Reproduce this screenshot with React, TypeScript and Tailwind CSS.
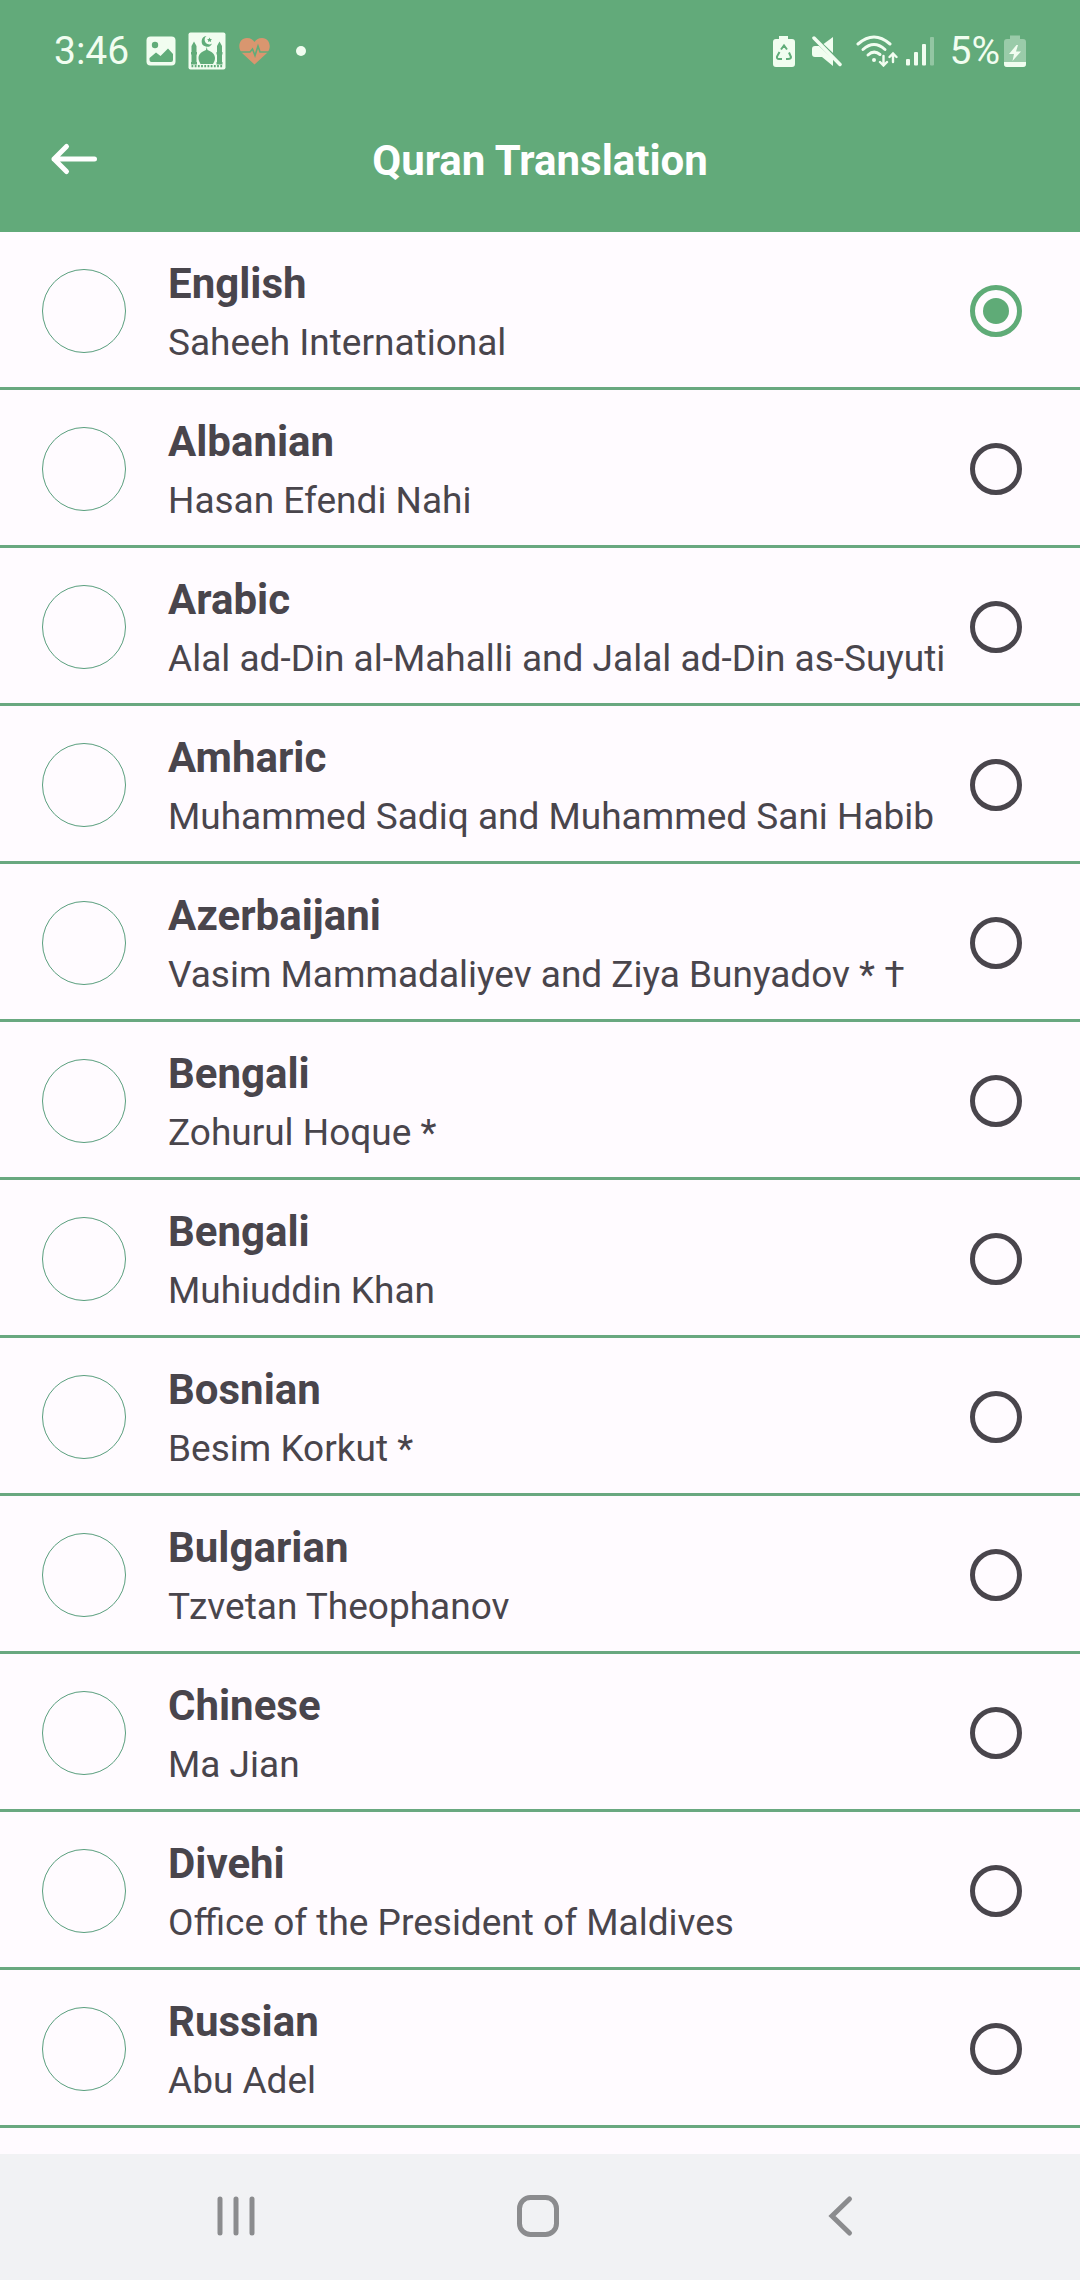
import React, { useState } from 'react';

const translations = [
  { id: 1, language: 'English', author: 'Saheeh International' },
  { id: 2, language: 'Albanian', author: 'Hasan Efendi Nahi' },
  { id: 3, language: 'Arabic', author: 'Alal ad-Din al-Mahalli and Jalal ad-Din as-Suyuti' },
  { id: 4, language: 'Amharic', author: 'Muhammed Sadiq and Muhammed Sani Habib' },
  { id: 5, language: 'Azerbaijani', author: 'Vasim Mammadaliyev and Ziya Bunyadov * †' },
  { id: 6, language: 'Bengali', author: 'Zohurul Hoque *' },
  { id: 7, language: 'Bengali', author: 'Muhiuddin Khan' },
  { id: 8, language: 'Bosnian', author: 'Besim Korkut *' },
  { id: 9, language: 'Bulgarian', author: 'Tzvetan Theophanov' },
  { id: 10, language: 'Chinese', author: 'Ma Jian' },
  { id: 11, language: 'Divehi', author: 'Office of the President of Maldives' },
  { id: 12, language: 'Russian', author: 'Abu Adel' },
];

const StatusBar: React.FC = () => (
  <div className="flex h-[102px] items-center justify-between pr-[54px] pl-[54px] text-[#f1fdf0]">
    <div className="flex items-center">
      <span className="w-[92px] text-[39px] leading-[44px] whitespace-nowrap">3:46</span>
      {/* Gallery */}
      <svg className="h-[30px] w-[30px]" viewBox="0 0 30 30">
        <rect x="0.5" y="0.5" width="29" height="29" rx="4" fill="currentColor" />
        <circle cx="9" cy="9" r="3.2" fill="#60ac79" />
        <path d="M3.5 22 L10 16.5 L14.5 20 L22 12.5 L27 18 V24 Q27 26 25 26 H5.5 Q3.5 26 3.5 24 Z" fill="#60ac79" />
      </svg>
      {/* Mosque */}
      <svg className="ml-3 h-[38px] w-[38px]" viewBox="0 0 38 38">
        <rect x="0.5" y="0.5" width="37" height="37" rx="2" fill="currentColor" />
        <g fill="#60ac79">
          <path d="M18.500 4 A5.400 5.400 0 1 0 24 11.500 A4.500 4.500 0 0 1 18.500 4 Z" />
          <path d="M21.500 5.500 l.8 1.500 1.700.2 -1.200 1.200 .3 1.700 -1.600-.8 -1.500.8 .3-1.700 -1.200-1.200 1.700-.2 Z" />
          <path d="M18.700 15 L19.500 18 C24 19.500 27 22.500 27 26 C27 28.500 26 30 25 32 H12.500 C11.500 30 10.500 28.500 10.500 26 C10.500 22.500 13.500 19.500 18 18 Z" />
          <path d="M6 9.500 L8.500 14 V20 H9 V22.500 H8.500 V30 H9 V32.500 H3 V30 H3.500 V22.500 H3 V20 H3.500 V14 Z" />
          <path d="M31.500 9.500 L34 14 V20 H34.500 V22.500 H34 V30 H34.500 V32.500 H28.500 V30 H29 V22.500 H28.500 V20 H29 V14 Z" />
        </g>
        <path d="M3.500 34.200 H34.500" stroke="#60ac79" strokeWidth="2.200" strokeDasharray="1.800 1.400" />
      </svg>
      {/* Heart rate */}
      <svg className="ml-3 h-[28px] w-[34px]" viewBox="0 0 34 28">
        <path d="M16.500 27.500 L4 16 C-1 11 1 1 9 1 C13 1 15 3 16.500 5 C18 3 20 1 24 1 C32 1 34 11 29 16 Z" fill="#d9966f" />
        <path d="M1 15 H12 L14.500 12 L17 18.500 L20 9 L22 15 H32" fill="none" stroke="#60ac79" strokeWidth="1.600" />
      </svg>
      <span className="ml-6 h-[10px] w-[10px] rounded-full bg-[#f1fdf0]" />
    </div>

    <div className="flex items-center">
      {/* Battery protection */}
      <svg className="h-[33px] w-[24px]" viewBox="0 0 24 33">
        <path d="M7 1 H16 V4 H20 Q23 4 23 7 V29 Q23 32 20 32 H4 Q1 32 1 29 V7 Q1 4 4 4 H7 Z" fill="currentColor" />
        <path d="M9 14.500 L12 10.500 L15 14.500 M17 17.500 L19 22 Q19 24 16 24 H14 M10 24 H7 Q4.500 24 5 21.500 L7.500 17" fill="none" stroke="#60ac79" strokeWidth="2" />
      </svg>
      {/* Muted */}
      <svg className="ml-[14px] h-[32px] w-[32px]" viewBox="0 0 32 32">
        <path d="M23 2 V18 L13.500 9 Z" fill="currentColor" />
        <path d="M5 11 H9 L23 24 V31 L12 22 H5 Q2 22 2 19 V14 Q2 11 5 11 Z" fill="currentColor" />
        <path d="M4 3 L30 29.500" stroke="currentColor" strokeWidth="3.500" strokeLinecap="round" />
      </svg>
      {/* Wi-Fi */}
      <svg className="ml-[14px] h-[32px] w-[42px]" viewBox="0 0 42 32" fill="none" stroke="currentColor" strokeWidth="3" strokeLinecap="round">
        <path d="M2 9 Q18 -5 34 9" />
        <path d="M7 14.500 Q18 4.500 29 14.500" />
        <path d="M12 20 Q18 14.500 24 19.500" />
        <circle cx="18" cy="25" r="1" fill="currentColor" strokeWidth="2" />
        <path d="M27.500 21 V30 M24 27 L27.500 30.500 L31 27" strokeWidth="2.400" />
        <path d="M37 27 V19 M33.500 22 L37 18.500 L40.500 22" strokeWidth="2.400" />
      </svg>
      {/* Signal */}
      <svg className="ml-2 h-[30px] w-[28px]" viewBox="0 0 28 30" fill="currentColor">
        <rect x="0" y="23" width="4" height="6.500" rx="1" />
        <rect x="8" y="16" width="4" height="13.500" rx="1" />
        <rect x="16" y="8" width="4" height="21.500" rx="1" />
        <rect x="24" y="1" width="4" height="28.500" rx="1" opacity="0.350" />
      </svg>
      <span className="ml-4 text-[39px] leading-[44px]">5%</span>
      {/* Charging */}
      <svg className="ml-1 h-[33px] w-[22px]" viewBox="0 0 22 33">
        <path d="M6 0.500 H16 V4 H19 Q22 4 22 7 V29 Q22 32 19 32 H3 Q0 32 0 29 V7 Q0 4 3 4 H6 Z" fill="currentColor" opacity="0.400" />
        <path d="M0 27 H22 V29 Q22 32 19 32 H3 Q0 32 0 29 Z M12.500 10 L5 19 H10 L8.500 26 L17 16.500 H12 L14 10 Z" fill="currentColor" />
      </svg>
    </div>
  </div>
);

const NavigationBar: React.FC = () => (
  <nav className="grid h-[126px] grid-cols-3 bg-[#f1f2f4] pr-[88px] pb-[2px] pl-[84px] text-[#8b8c8e]">
    <button type="button" aria-label="Recent apps" className="flex items-center justify-center">
      <svg className="h-[42px] w-[42px]" viewBox="0 0 42 42" stroke="currentColor" strokeWidth="5" strokeLinecap="round">
        <path d="M6 4 V38 M22 4 V38 M38 4 V38" />
      </svg>
    </button>
    <button type="button" aria-label="Home" className="flex items-center justify-center">
      <svg className="h-[42px] w-[42px]" viewBox="0 0 42 42" fill="none" stroke="currentColor" strokeWidth="5">
        <rect x="2.500" y="2.500" width="37" height="37" rx="11" />
      </svg>
    </button>
    <button type="button" aria-label="Back" className="flex items-center justify-center">
      <svg className="h-[42px] w-[42px]" viewBox="0 0 42 42" fill="none" stroke="currentColor" strokeWidth="5" strokeLinecap="round">
        <path d="M29.500 4 L12 21 L29.500 38" />
      </svg>
    </button>
  </nav>
);

const App: React.FC = () => {
  const [selected, setSelected] = useState(1);

  return (
    <div className="flex min-h-screen flex-col bg-[#fffbff] font-[Roboto,sans-serif] text-[#49454c]">
      <header className="bg-[#62aa7a]">
        <StatusBar />
        <div className="grid h-[130px] grid-cols-[98px_1fr_98px] items-start pt-[29px]">
          <button type="button" aria-label="Go back" className="flex h-[56px] items-center justify-end text-white">
            <svg className="h-[36px] w-[48px]" viewBox="0 0 48 36" fill="none" stroke="currentColor" strokeWidth="5" strokeLinecap="round" strokeLinejoin="round">
              <path d="M44.500 18 H4 M16.500 5.500 L4 18 L16.500 30.500" />
            </svg>
          </button>
          <h1 className="text-center text-[42px] leading-[60px] font-bold text-white">Quran Translation</h1>
        </div>
      </header>

      <main className="flex-1">
        {translations.map((item) => (
          <label
            key={item.id}
            className="flex h-[158px] cursor-pointer items-center border-b-[3px] border-[#69a880] pt-[3px] pr-[58px] pl-[42px]"
          >
            <span className="h-[84px] w-[84px] shrink-0 rounded-full border border-[#5a9f7e]" />
            <span className="ml-[42px] flex min-w-0 flex-1 flex-col pt-1">
              <span className="text-[42px] leading-[60px] font-bold">{item.language}</span>
              <span className="text-[37px] leading-[58px] whitespace-nowrap">{item.author}</span>
            </span>
            <input
              type="radio"
              name="translation"
              checked={selected === item.id}
              onChange={() => setSelected(item.id)}
              className="grid h-[52px] w-[52px] shrink-0 appearance-none place-content-center rounded-full border-[5px] border-[#49454c] before:h-[26px] before:w-[26px] before:rounded-full checked:border-[#5fab77] checked:before:bg-[#5fab77]"
            />
          </label>
        ))}
      </main>

      <NavigationBar />
    </div>
  );
};

export default App;
